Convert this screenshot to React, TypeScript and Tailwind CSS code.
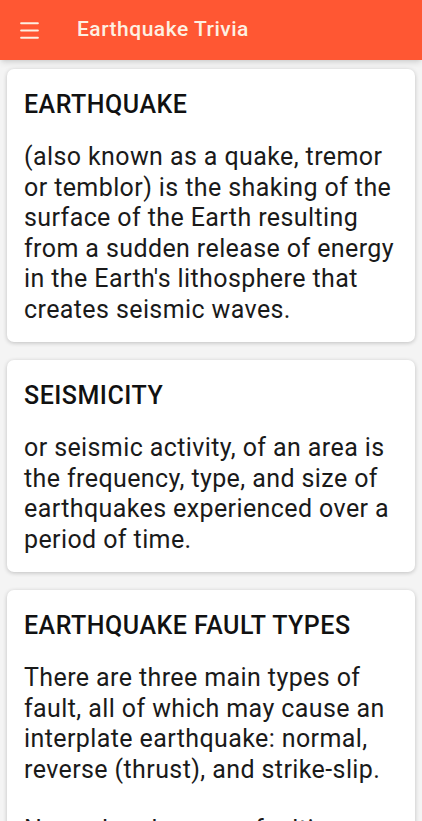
import { Menu } from "lucide-react";

const cards = [
  {
    title: "EARTHQUAKE",
    body: [
      "(also known as a quake, tremor or temblor) is the shaking of the surface of the Earth resulting from a sudden release of energy in the Earth's lithosphere that creates seismic waves.",
    ],
  },
  {
    title: "SEISMICITY",
    body: [
      "or seismic activity, of an area is the frequency, type, and size of earthquakes experienced over a period of time.",
    ],
  },
  {
    title: "EARTHQUAKE FAULT TYPES",
    body: [
      "There are three main types of fault, all of which may cause an interplate earthquake: normal, reverse (thrust), and strike-slip.",
      "Normal and reverse faulting are examples of dip-slip, where the displacement along the fault is in the direction of dip.",
    ],
  },
];

export default function App() {
  return (
    <div
      className="flex flex-col h-[821px] overflow-hidden bg-[#f4f4f4]"
      style={{ fontFamily: "Roboto, 'Noto Sans', sans-serif" }}
    >
      {/* Toolbar */}
      <div className="flex h-[60px] shrink-0 items-center bg-[#ff5733] shadow-md">
        <div className="flex w-[56px] justify-center pl-[2px]">
          <Menu className="h-[25px] w-[25px] text-[#fdf0e2]" strokeWidth={2} />
        </div>
        <span className="ml-[21px] text-[21px] font-medium tracking-[0.5px] text-[#fdf0e2]">
          Earthquake Trivia
        </span>
      </div>

      {/* Cards */}
      <div className="flex flex-col gap-[18px] px-[7px] pt-[9px]">
        {cards.map((c) => (
          <div
            key={c.title}
            className="rounded-[7px] bg-white px-[17px] pt-[21px] pb-[17px] shadow-[0_1px_4px_rgba(0,0,0,0.22)]"
          >
            <h2 className="text-[25px] font-medium leading-[30px] tracking-[0.5px] text-[#111]">
              {c.title}
            </h2>
            <div className="mt-[22px] text-[25px] leading-[30.5px] tracking-[0.4px] text-[#1a1a1a]">
              {c.body.map((p, i) => (
                <p key={i} className={i > 0 ? "mt-[30px]" : ""}>
                  {p}
                </p>
              ))}
            </div>
          </div>
        ))}
      </div>
    </div>
  );
}
